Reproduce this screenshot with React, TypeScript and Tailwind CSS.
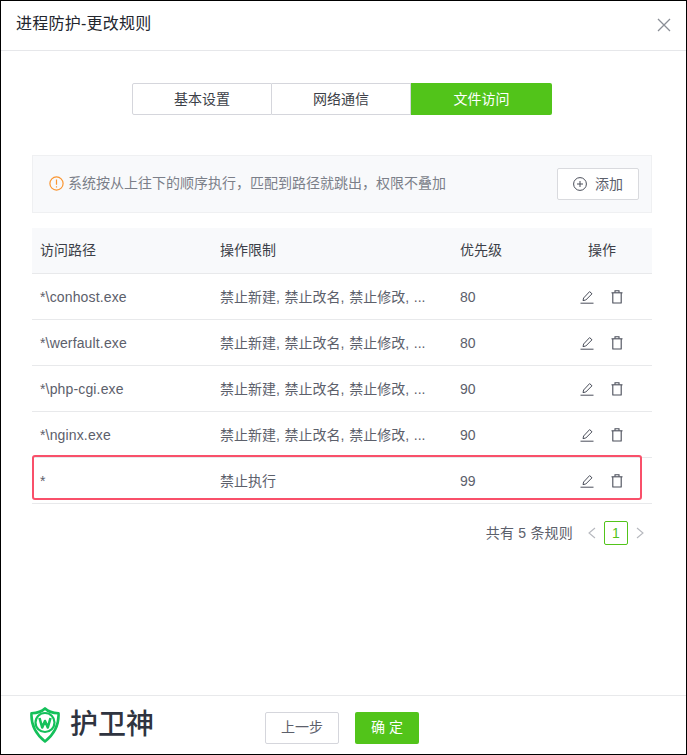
const rows = [
  { path: '*\\conhost.exe', limit: '禁止新建, 禁止改名, 禁止修改, ...', priority: 80 },
  { path: '*\\werfault.exe', limit: '禁止新建, 禁止改名, 禁止修改, ...', priority: 80 },
  { path: '*\\php-cgi.exe', limit: '禁止新建, 禁止改名, 禁止修改, ...', priority: 90 },
  { path: '*\\nginx.exe', limit: '禁止新建, 禁止改名, 禁止修改, ...', priority: 90 },
  { path: '*', limit: '禁止执行', priority: 99 },
]

const tabs = ['基本设置', '网络通信', '文件访问']

function EditIcon() {
  return (
    <svg width="14" height="14" viewBox="0 0 14 14" fill="none" stroke="#4a4e5a" strokeWidth="1">
      <path d="M0.5 13.2H13.5" />
      <path d="M3 10.6L3.6 8L9.6 1.6L12 3.8L5.8 10L3 10.6Z" strokeLinejoin="round" />
    </svg>
  )
}

function TrashIcon() {
  return (
    <svg width="12" height="14" viewBox="0 0 12 14" fill="none" stroke="#4a4e5a" strokeWidth="1.1">
      <path d="M0.5 2.8H11.5" />
      <path d="M4 2.6V0.8H8V2.6" />
      <path d="M1.8 3V13H10.2V3" strokeLinejoin="round" />
    </svg>
  )
}

function Logo() {
  return (
    <svg width="30" height="36" viewBox="0 0 30 36" fill="none">
      <path
        d="M15 1.5C18 4.5 23 6 28.5 6.2C29 15 27 25 15 34.5C3 25 1 15 1.5 6.2C7 6 12 4.5 15 1.5Z"
        stroke="#14c05a"
        strokeWidth="2.6"
        strokeLinejoin="round"
      />
      <circle cx="15" cy="15.5" r="9.5" stroke="#14c05a" strokeWidth="2.2" />
      <path d="M9.5 11L12.2 20.5L15 14L17.8 20.5L20.5 11" stroke="#14c05a" strokeWidth="2.6" strokeLinejoin="round" />
    </svg>
  )
}

export default function App() {
  return (
    <div
      className="flex h-[755px] w-[687px] flex-col border border-black bg-white text-[14px] text-[#5c606b]"
      style={{ fontFamily: '"Liberation Sans", "Noto Sans CJK SC", sans-serif' }}
    >
      {/* header */}
      <div className="flex h-[50px] shrink-0 items-center justify-between border-b border-[#e6e7ea] pl-[15px] pr-[15px]">
        <span className="-mt-[4px] text-[16px] tracking-[0.25px] text-[#23262e]">进程防护-更改规则</span>
        <svg width="14" height="14" viewBox="0 0 14 14" fill="none" stroke="#8a8e96" strokeWidth="1.3" className="-mt-[2px]">
          <path d="M1 1L13 13M13 1L1 13" />
        </svg>
      </div>

      <div className="flex-1 px-[31px]">
        {/* tabs */}
        <div className="mt-[32px] flex justify-center pr-[3px]">
          {tabs.map((tab, i) => (
            <div
              key={tab}
              className={
                i === 2
                  ? 'flex h-[32px] w-[141px] items-center justify-center rounded-r-[2px] bg-[#52c41a] text-white'
                  : i === 0
                    ? 'flex h-[32px] w-[140px] items-center justify-center rounded-l-[2px] border border-[#d5d6dc] text-[#3c3f48]'
                    : 'flex h-[32px] w-[139px] items-center justify-center border-y border-r border-[#d5d6dc] text-[#3c3f48]'
              }
            >
              {tab}
            </div>
          ))}
        </div>

        {/* notice */}
        <div className="mt-[40px] flex h-[58px] w-[620px] items-center justify-between border border-[#eff0f2] bg-[#f8f9fb] pl-[16px] pr-[12px]">
          <div className="-mt-[2px] flex items-center gap-[4px] text-[#7b7f89]">
            <svg width="15" height="15" viewBox="0 0 15 15" fill="none" stroke="#fa9632" strokeWidth="1.2">
              <circle cx="7.5" cy="7.5" r="6.6" />
              <path d="M7.5 3.6V8.8M7.5 10.2V11.4" />
            </svg>
            <span>系统按从上往下的顺序执行，匹配到路径就跳出，权限不叠加</span>
          </div>
          <button className="flex h-[32px] w-[82px] items-center justify-center gap-[8px] rounded-[2px] border border-[#d9dade] bg-white text-[#5c606b]">
            <svg width="14" height="14" viewBox="0 0 14 14" fill="none" stroke="#4a4e5a" strokeWidth="1">
              <circle cx="7" cy="7" r="6.4" />
              <path d="M7 4V10M4 7H10" />
            </svg>
            添加
          </button>
        </div>

        {/* table */}
        <div className="relative mt-[15px] w-[620px]">
          <div className="flex h-[46px] items-center border-b border-[#e8e9eb] bg-[#f8f9fb] text-[#3c3f48]">
            <div className="w-[188px] pl-[8px]">访问路径</div>
            <div className="w-[240px]">操作限制</div>
            <div className="w-[102px]">优先级</div>
            <div className="w-[80px] text-center">操作</div>
          </div>
          {rows.map((row) => (
            <div key={row.path} className="flex h-[46px] items-center border-b border-[#e8e9eb]">
              <div className="w-[188px] pl-[8px] pt-[2px] tracking-[0.15px]">{row.path}</div>
              <div className="w-[240px] pt-[2px] [word-spacing:0.8px]">{row.limit}</div>
              <div className="w-[102px] pt-[2px]">{row.priority}</div>
              <div className="-ml-[1px] flex w-[80px] items-center justify-center gap-[17px]">
                <EditIcon />
                <TrashIcon />
              </div>
            </div>
          ))}
          {/* red highlight drawn over the last row */}
          <div className="absolute bottom-[4px] left-0 h-[45px] w-[610px] rounded-[3px] border-2 border-[#f9506a]" />
        </div>

        {/* pagination */}
        <div className="mt-[17px] flex w-[620px] items-center justify-end pr-[7px]">
          <span className="mr-[14px] tracking-[0.2px] text-[#5c606b]">共有 5 条规则</span>
          <svg width="10" height="12" viewBox="0 0 10 12" fill="none" stroke="#b6b8be" strokeWidth="1.1">
            <path d="M8 1L2 6L8 11" />
          </svg>
          <div className="mx-[7px] flex h-[24px] w-[24px] items-center justify-center rounded-[2px] border border-[#52c41a] text-[#52c41a]">
            1
          </div>
          <svg width="10" height="12" viewBox="0 0 10 12" fill="none" stroke="#b6b8be" strokeWidth="1.1">
            <path d="M2 1L8 6L2 11" />
          </svg>
        </div>
      </div>

      {/* footer */}
      <div className="flex h-[59px] shrink-0 items-center border-t border-[#e8e9eb] pl-[29px]">
        <Logo />
        <span className="ml-[10px] w-[195px] text-[28px] font-medium text-[#2f3440]">护卫神</span>
        <button className="mt-[5px] h-[32px] w-[74px] rounded-[2px] border border-[#d5d6dc] text-[#5c606b]">上一步</button>
        <button className="ml-[16px] mt-[5px] h-[32px] w-[64px] rounded-[2px] bg-[#52c41a] text-white">确 定</button>
      </div>
    </div>
  )
}
